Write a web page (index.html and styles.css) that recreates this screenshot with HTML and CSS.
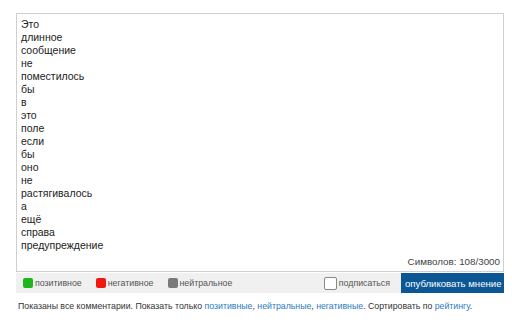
FILE: index.html
```html
<!DOCTYPE html>
<html lang="ru">
<head>
<meta charset="utf-8">
<link rel="stylesheet" href="styles.css">
</head>
<body>
<div class="wrap">
  <div class="field">
    <div class="msg">Это<br>длинное<br>сообщение<br>не<br>поместилось<br>бы<br>в<br>это<br>поле<br>если<br>бы<br>оно<br>не<br>растягивалось<br>а<br>ещё<br>справа<br>предупреждение</div>
    <div class="counter">Символов: 108/3000</div>
  </div>
  <div class="bar">
    <div class="opt"><span class="sq green"></span>позитивное</div>
    <div class="opt"><span class="sq red"></span>негативное</div>
    <div class="opt"><span class="sq gray"></span>нейтральное</div>
    <label class="sub"><span class="cb"></span>подписаться</label>
    <button class="post">опубликовать мнение</button>
  </div>
  <p class="foot">Показаны все комментарии. Показать только <a href="#">позитивные</a>, <a href="#">нейтральные</a>, <a href="#">негативные</a>. Сортировать по <a href="#">рейтингу</a>.</p>
</div>
</body>
</html>
```
FILE: styles.css
```css
html, body { margin: 0; padding: 0; background: #fff; }
body { font-family: "Liberation Sans", Arial, sans-serif; color: #333; }
.wrap { padding: 13px 0 0 16px; width: 488px; }
.field {
  border: 1px solid #cfcfcf;
  box-sizing: border-box;
  height: 259px;
  padding: 4px 4px 0 4px;
  position: relative;
  background: #fff;
}
.msg { font-size: 10.5px; line-height: 13px; color: #222; }
.counter {
  position: absolute; right: 3px; bottom: 4px;
  font-size: 9.8px; color: #444;
}
.bar {
  display: flex; align-items: center;
  background: #f0f0f0;
  height: 20px;
  margin-top: 1px;
  font-size: 8.8px; color: #555;
  padding-left: 7px;
}
.opt { display: flex; align-items: center; margin-right: 14px; }
.sq { width: 10px; height: 10px; border-radius: 2px; margin-right: 2px; display: inline-block; }
.green { background: #1fb51f; }
.red { background: #f0190f; }
.gray { background: #7a7a7a; }
.sub { display: flex; align-items: center; margin-left: auto; margin-right: 11px; }
.cb { width: 11px; height: 11px; border: 1px solid #888; border-radius: 2px; background: #fff; margin-right: 2px; }
.post {
  border: 0; margin: 0;
  background: #0b5796; color: #fff;
  font-family: inherit; font-size: 9.6px;
  height: 20px; padding: 0 4px;
  width: 103px;
  white-space: nowrap;
}
.foot { margin: 8px 0 0 2px; font-size: 8.75px; color: #333; white-space: nowrap; }
.foot a { color: #2a7bc1; text-decoration: none; }
```
